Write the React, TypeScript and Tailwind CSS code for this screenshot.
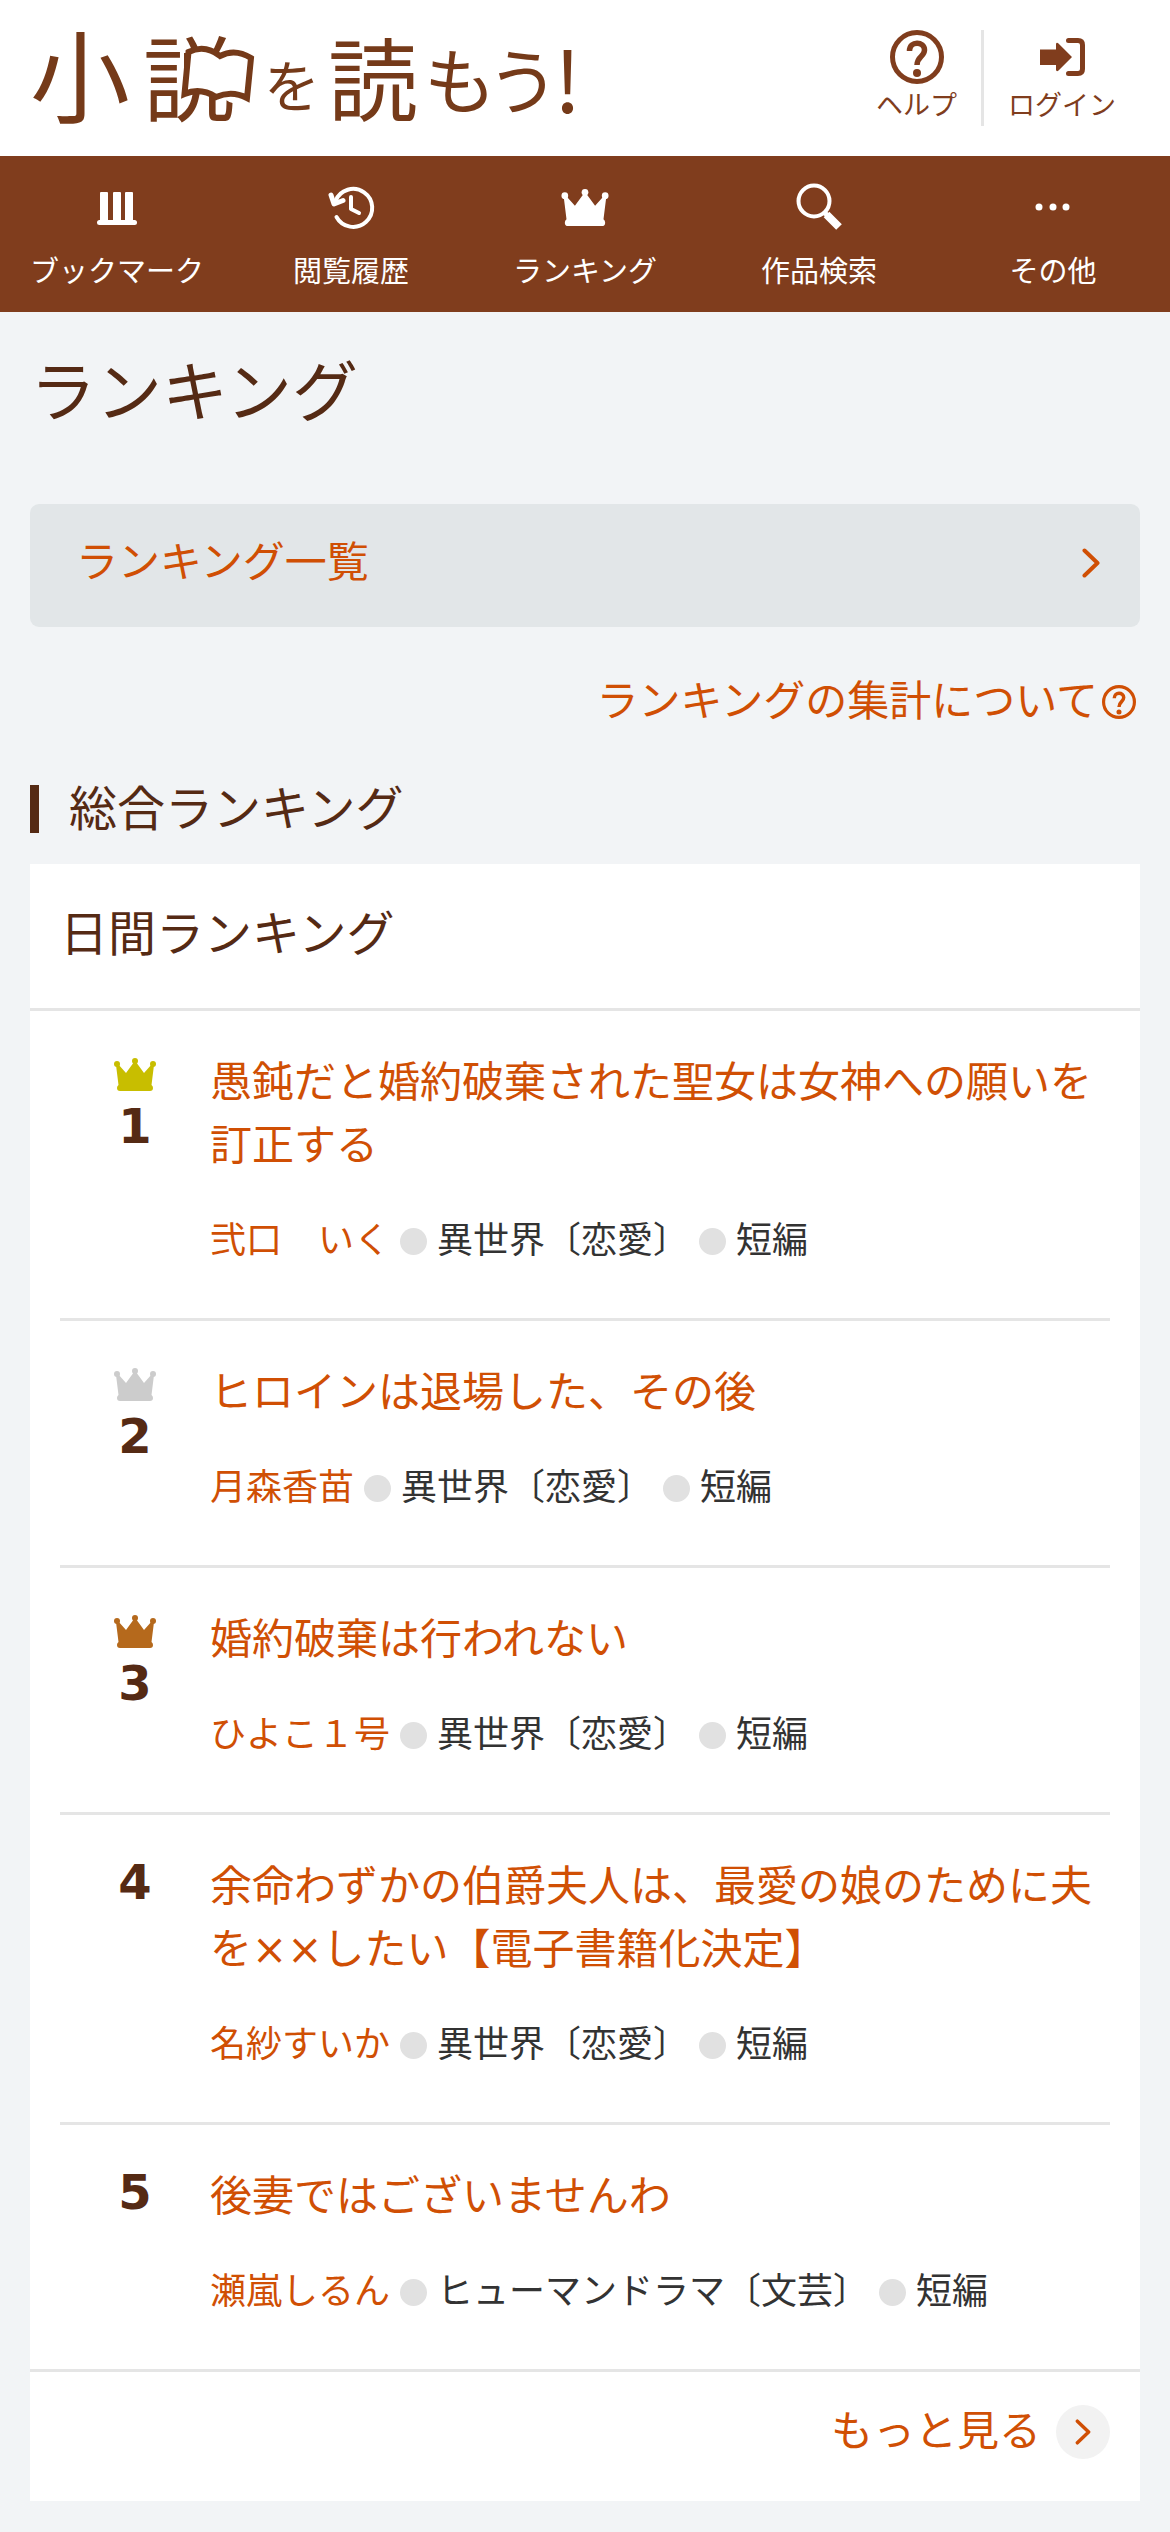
import React from 'react';

type Novel = {
  rank: number;
  title: string;
  author: string;
  genre: string;
  type: string;
};

const novels: Novel[] = [
  { rank: 1, title: '愚鈍だと婚約破棄された聖女は女神への願いを訂正する', author: '弐口　いく', genre: '異世界〔恋愛〕', type: '短編' },
  { rank: 2, title: 'ヒロインは退場した、その後', author: '月森香苗', genre: '異世界〔恋愛〕', type: '短編' },
  { rank: 3, title: '婚約破棄は行われない', author: 'ひよこ１号', genre: '異世界〔恋愛〕', type: '短編' },
  { rank: 4, title: '余命わずかの伯爵夫人は、最愛の娘のために夫を××したい【電子書籍化決定】', author: '名紗すいか', genre: '異世界〔恋愛〕', type: '短編' },
  { rank: 5, title: '後妻ではございませんわ', author: '瀬嵐しるん', genre: 'ヒューマンドラマ〔文芸〕', type: '短編' },
];

// gold, silver, bronze
const crownColors: Record<number, string> = {
  1: 'text-[#c8be00]',
  2: 'text-[#cccccc]',
  3: 'text-[#b5691c]',
};

const Crown: React.FC<{ className?: string }> = ({ className }) => (
  <svg viewBox="0 0 42 33" className={className} fill="currentColor" aria-hidden="true">
    <circle cx="3" cy="6" r="3" />
    <circle cx="21" cy="3" r="3" />
    <circle cx="39" cy="6" r="3" />
    <path d="M2 7 L4 6 L12 15 L20 4 H22 L30 15 L38 6 L40 7 L37.500 27 Q39 28 39 30 Q39 33 36 33 H6 Q3 33 3 30 Q3 28 4.500 27 Z" />
  </svg>
);

const QuestionCircle: React.FC<{ className?: string }> = ({ className }) => (
  <svg viewBox="0 0 54 54" className={className} fill="none" stroke="currentColor" strokeWidth="5" aria-hidden="true">
    <circle cx="27" cy="27" r="24.500" />
    <path d="M19.500 21 C19.500 10.500 34.500 11 34.500 20 C34.500 27 27 26 27 35" strokeLinecap="butt" strokeWidth="5.500" />
    <circle cx="27" cy="43" r="4" fill="currentColor" stroke="none" />
  </svg>
);

const Chevron: React.FC<{ className?: string }> = ({ className }) => (
  <svg viewBox="0 0 18 30" className={className} fill="none" stroke="currentColor" strokeWidth="4" strokeLinecap="round" strokeLinejoin="round" aria-hidden="true">
    <path d="M2.500 2.500 L15.500 15 L2.500 27.500" />
  </svg>
);

const LoginIcon = () => (
  <svg viewBox="0 0 54 54" className="size-[54px] shrink-0" aria-hidden="true">
    <path d="M5 19.500 H21 V14 Q21.500 12 23.500 13.500 L37 27 L23.500 40.500 Q21.500 42 21 40 V35 H5 Z" fill="currentColor" />
    <path d="M33.500 10.500 H43 Q47.500 10.500 47.500 15 V39 Q47.500 43.500 43 43.500 H33.500" fill="none" stroke="currentColor" strokeWidth="5" strokeLinecap="round" />
  </svg>
);

const Logo = () => (
  <svg viewBox="0 0 550 96" className="h-24 w-[550px] overflow-visible text-[#753a19]" role="img" aria-label="小説を読もう!">
    <g fill="currentColor" fontFamily="'Noto Sans CJK JP', sans-serif">
      <text x="0" y="85" fontSize="100">小</text>
      <text x="113" y="84" fontSize="92">説</text>
      <text x="234" y="77" fontSize="56">を</text>
      <text x="298" y="84" fontSize="90">読</text>
      <text x="394" y="78" fontSize="72">も</text>
      <text x="457" y="78" fontSize="72">う</text>
      <text x="524" y="83" fontSize="84">!</text>
    </g>
    {/* open book over the right half of the second character */}
    <path
      d="M158.500 22 Q175 14 190 26 Q205 18 221 28 L217 68 Q202 60 186 67 Q170 57 154.500 64 Z"
      fill="#ffffff"
      stroke="currentColor"
      strokeWidth="6"
    />
  </svg>
);

const navItems = [
  {
    label: 'ブックマーク',
    icon: (
      <svg viewBox="0 0 54 54" className="size-[54px]" fill="currentColor" aria-hidden="true">
        <rect x="10" y="12" width="8" height="30" rx="1" />
        <rect x="23" y="12" width="8" height="30" rx="1" />
        <rect x="35" y="12" width="8" height="30" rx="1" />
        <rect x="7" y="40" width="40" height="5" rx="2.500" />
      </svg>
    ),
  },
  {
    label: '閲覧履歴',
    icon: (
      <svg viewBox="0 0 54 54" className="size-[54px]" fill="none" stroke="currentColor" strokeWidth="4" strokeLinecap="round" strokeLinejoin="round" aria-hidden="true">
        <path d="M11.500 21 A19 19 0 1 1 12.500 37" />
        <path d="M7 15 L10 24 L19 20.500" strokeWidth="5" />
        <path d="M27 17 V29 L35 33" />
      </svg>
    ),
  },
  {
    label: 'ランキング',
    icon: (
      <div className="flex size-[54px] items-center justify-center">
        <Crown className="h-[37px] w-12" />
      </div>
    ),
  },
  {
    label: '作品検索',
    icon: (
      <svg viewBox="0 0 54 54" className="size-[54px]" fill="none" stroke="currentColor" aria-hidden="true">
        <circle cx="22" cy="21" r="15.500" strokeWidth="4" />
        <path d="M32 32 L35 35" strokeWidth="5" />
        <path d="M34.500 34.500 L47 47" strokeWidth="8" strokeLinejoin="round" />
      </svg>
    ),
  },
  {
    label: 'その他',
    icon: (
      <svg viewBox="0 0 54 54" className="size-[54px]" fill="currentColor" aria-hidden="true">
        <circle cx="13" cy="27" r="3.500" />
        <circle cx="27" cy="27" r="3.500" />
        <circle cx="40" cy="27" r="3.500" />
      </svg>
    ),
  },
];

const Dot = () => <span className="size-[27px] shrink-0 rounded-full bg-[#e1e1e1]" />;

const NovelRow: React.FC<{ novel: Novel }> = ({ novel }) => {
  const crown = crownColors[novel.rank];

  return (
    <li className="mx-[30px] flex border-b-3 border-[#e5e5e5] pt-10 pb-[50px] last:mx-0 last:border-b-0 last:px-[30px]">
      <div className="flex w-[150px] shrink-0 flex-col items-center gap-2">
        {crown && (
          <div className={crown}>
            <Crown className="mt-[7px] h-[33px] w-[42px]" />
          </div>
        )}
        <span className="text-[48px] leading-[54px] font-bold text-[#552a14]">{novel.rank}</span>
      </div>
      <div className="min-w-0 flex-1">
        <a href="#" className="block text-[42px] leading-[63px] text-[#d04f04]">
          {novel.title}
        </a>
        <div className="mt-[37px] flex flex-wrap items-center gap-x-2.5 text-[36px] leading-[54px] text-[#333333]">
          <a href="#" className="text-[#d04f04]">
            {novel.author}
          </a>
          <Dot />
          <span>{novel.genre}</span>
          <Dot />
          <span>{novel.type}</span>
        </div>
      </div>
    </li>
  );
};

const App: React.FC = () => {
  return (
    <div lang="ja" className="min-h-screen bg-[#f2f4f6] pb-[30px] font-['DejaVu_Sans','Noto_Sans_CJK_JP',sans-serif] text-[#552a14]">
      {/* Header */}
      <header className="flex items-center justify-between bg-white px-[30px] py-[30px] text-[#803d1d]">
        <a href="#">
          <Logo />
        </a>
        <div className="flex h-24">
          <a href="#" className="flex w-[132px] flex-col items-center border-r-3 border-[#e5e5e5] text-[27px] leading-[44px]">
            <QuestionCircle className="size-[54px] shrink-0" />
            ヘルプ
          </a>
          <a href="#" className="flex w-[156px] flex-col items-center text-[27px] leading-[44px]">
            <LoginIcon />
            ログイン
          </a>
        </div>
      </header>

      {/* Global navigation */}
      <nav className="grid grid-cols-5 bg-[#803d1d] text-white">
        {navItems.map((item) => (
          <a key={item.label} href="#" className="flex flex-col items-center gap-3.5 pt-6 pb-4 text-[29px] leading-[48px]">
            {item.icon}
            <span>{item.label}</span>
          </a>
        ))}
      </nav>

      <main className="px-[30px]">
        <h1 className="pt-[34px] text-[66px] leading-[96px]">ランキング</h1>

        <a href="#" className="mt-[62px] flex items-center justify-between rounded-[9px] bg-[#e2e6e8] pt-[27px] pr-10 pb-[33px] pl-[46px] text-[42px] leading-[63px] text-[#d04f04]">
          ランキング一覧
          <Chevron className="h-[30px] w-[18px]" />
        </a>

        <div className="mt-[43px] flex justify-end">
          <a href="#" className="flex items-center gap-1 pr-1 text-[42px] leading-[63px] text-[#d04f04]">
            ランキングの集計について
            <QuestionCircle className="size-[34px]" />
          </a>
        </div>

        <h2 className="mt-10 flex items-center gap-[30px] text-[48px] leading-[72px]">
          <span className="h-12 w-[9px] bg-[#552a14]" />
          総合ランキング
        </h2>

        {/* Daily ranking */}
        <section className="mt-[19px] bg-white">
          <h3 className="border-b-3 border-[#e5e5e5] px-[30px] pt-[34px] pb-[38px] text-[48px] leading-[72px]">日間ランキング</h3>
          <ol>
            {novels.map((novel) => (
              <NovelRow key={novel.rank} novel={novel} />
            ))}
          </ol>
          <div className="flex justify-end border-t-3 border-[#e5e5e5] px-[30px] pt-7 pb-[38px]">
            <a href="#" className="flex items-center gap-[15px] text-[42px] leading-[63px] text-[#d04f04]">
              もっと見る
              <span className="flex size-[54px] items-center justify-center rounded-full bg-[#f2f2f2]">
                <Chevron className="h-[26px] w-4" />
              </span>
            </a>
          </div>
        </section>
      </main>
    </div>
  );
};

export default App;
